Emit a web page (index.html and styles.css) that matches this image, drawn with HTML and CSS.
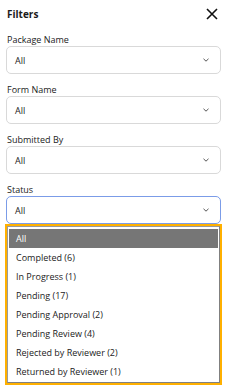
FILE: index.html
```html
<!DOCTYPE html>
<html>
<head>
<meta charset="utf-8">
<link rel="stylesheet" href="styles.css">
</head>
<body>
<div class="panel">
  <div class="header">
    <span class="title">Filters</span>
    <svg class="close" width="12" height="12" viewBox="0 0 12 12"><path d="M1 1L11 11M11 1L1 11" stroke="#111" stroke-width="1.6" fill="none"/></svg>
  </div>
  <div class="field">
    <div class="label">Package Name</div>
    <div class="select"><span>All</span><svg class="chev" width="6" height="4" viewBox="0 0 6 4"><path d="M0.5 0.8L3 3.2L5.5 0.8" stroke="#555" stroke-width="1" fill="none"/></svg></div>
  </div>
  <div class="field">
    <div class="label">Form Name</div>
    <div class="select"><span>All</span><svg class="chev" width="6" height="4" viewBox="0 0 6 4"><path d="M0.5 0.8L3 3.2L5.5 0.8" stroke="#555" stroke-width="1" fill="none"/></svg></div>
  </div>
  <div class="field">
    <div class="label">Submitted By</div>
    <div class="select"><span>All</span><svg class="chev" width="6" height="4" viewBox="0 0 6 4"><path d="M0.5 0.8L3 3.2L5.5 0.8" stroke="#555" stroke-width="1" fill="none"/></svg></div>
  </div>
  <div class="field last">
    <div class="label">Status</div>
    <div class="select open"><span>All</span><svg class="chev" width="6" height="4" viewBox="0 0 6 4"><path d="M0.5 0.8L3 3.2L5.5 0.8" stroke="#555" stroke-width="1" fill="none"/></svg></div>
    <div class="dropdown">
      <div class="list">
        <div class="opt selected">All</div>
        <div class="opt">Completed (6)</div>
        <div class="opt">In Progress (1)</div>
        <div class="opt">Pending (17)</div>
        <div class="opt">Pending Approval (2)</div>
        <div class="opt">Pending Review (4)</div>
        <div class="opt">Rejected by Reviewer (2)</div>
        <div class="opt">Returned by Reviewer (1)</div>
      </div>
    </div>
  </div>
</div>
</body>
</html>
```
FILE: styles.css
```css
html, body {
  margin: 0;
  padding: 0;
  background: #fff;
}
body {
  font-family: "Open Sans", "Noto Sans", sans-serif;
  font-size: 9px;
  color: #1b1b1b;
}
.panel {
  padding: 0 6px;
}
.header {
  height: 34px;
  display: flex;
  align-items: flex-start;
  justify-content: space-between;
}
.title {
  font-weight: 700;
  font-size: 10px;
  line-height: 12px;
  margin-top: 8px;
  margin-left: 1px;
}
.close {
  margin-top: 8px;
  margin-right: 3px;
}
.field {
  margin-bottom: 10px;
}
.field.last {
  margin-bottom: 0;
}
.label {
  height: 12px;
  line-height: 12px;
  padding-left: 1px;
}
.select {
  height: 28px;
  box-sizing: border-box;
  border: 1px solid #d9d9d9;
  border-radius: 5px;
  display: flex;
  align-items: center;
  justify-content: space-between;
  padding: 0 11px 0 8px;
}
.select.open {
  border-color: #7b9ce8;
}
.dropdown {
  margin: 0 -1px;
  border: 2px solid #ffb000;
}
.list {
  border: 1px solid #9a9a9a;
  border-right-color: #808080;
  border-bottom-color: #808080;
  padding: 2px 0 1px 0;
}
.opt {
  height: 19px;
  line-height: 19px;
  padding-left: 8px;
}
.opt.selected {
  background: #767676;
  color: #fff;
  margin: 0 1px;
  padding-left: 7px;
}
```
